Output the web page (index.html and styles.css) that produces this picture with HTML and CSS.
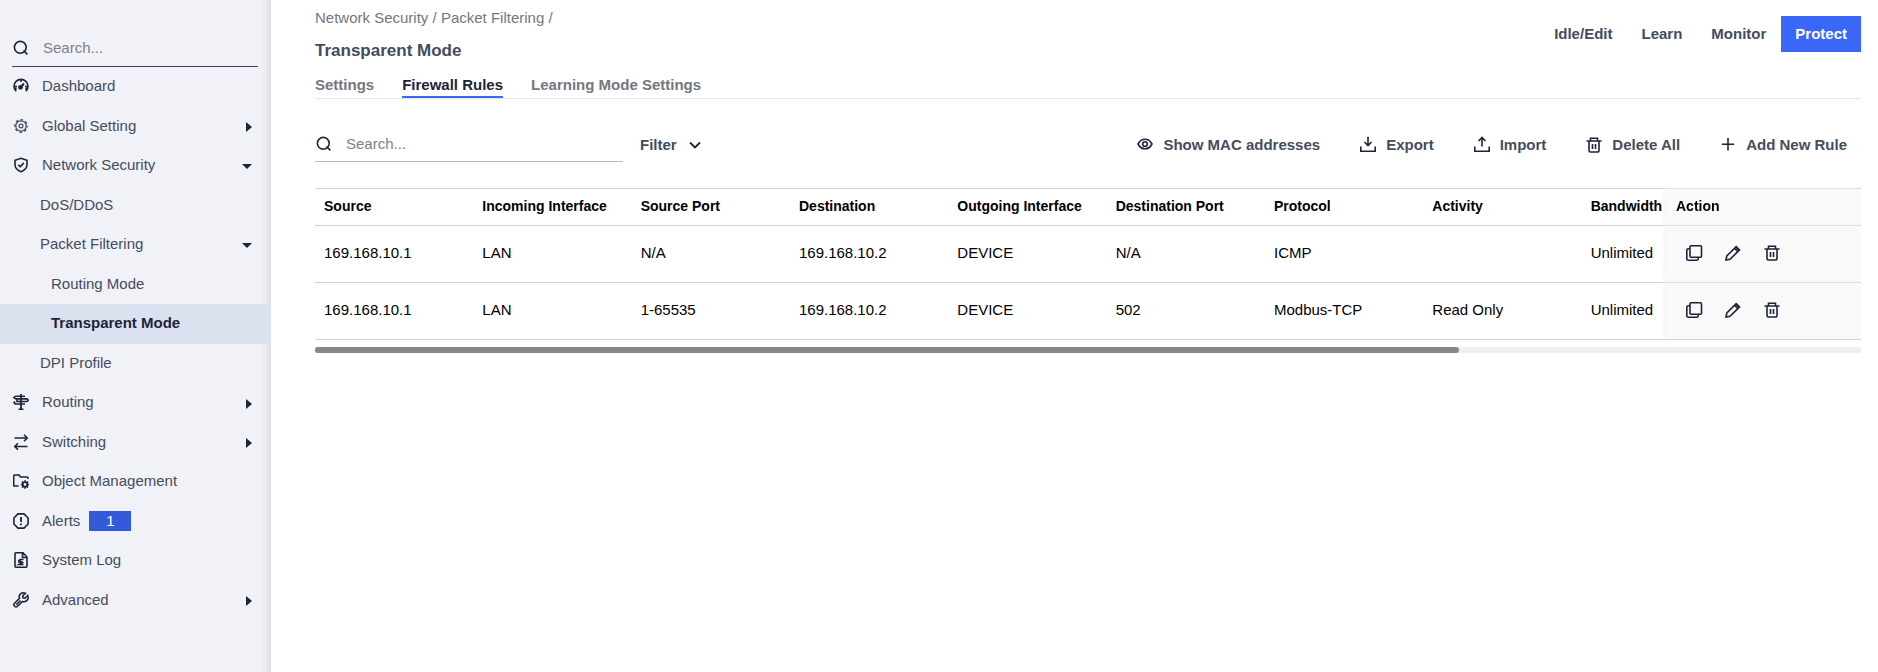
FILE: index.html
```html
<!DOCTYPE html>
<html lang="en">
<head>
<meta charset="utf-8">
<title>Transparent Mode</title>
<link rel="stylesheet" href="styles.css">
</head>
<body>
<svg class="sprite" aria-hidden="true">
  <symbol id="i-search" viewBox="0 0 16 16"><circle cx="7.3" cy="7.3" r="5.900"/><path d="M10.500 10.500 14.400 14.400"/></symbol>
  <symbol id="i-trash" viewBox="0 0 18 18"><path d="M1.500 5h15M5.500 4.500V2.200h7v2.300M4 5v9.500a1.500 1.500 0 0 0 1.500 1.500h7a1.500 1.500 0 0 0 1.500-1.500V5"/><path d="M7.500 8v5M10.500 8v5"/></symbol>
  <symbol id="i-copy" viewBox="0 0 18 18"><rect x="5" y="1.800" width="11.500" height="11.500" rx="1"/><path d="M4.500 4.800H3.300a1.500 1.500 0 0 0-1.500 1.500v8.400a1.500 1.500 0 0 0 1.500 1.500h8.400a1.500 1.500 0 0 0 1.500-1.500v-.8"/></symbol>
  <symbol id="i-edit" viewBox="0 0 18 18"><path d="M2 16l.8-4L12.200 2.600l3.300 3.300L6 15.200zM10.500 4.300l3.300 3.300"/><path d="M12.200 3.500l2.600 2.600"/></symbol>
</svg>
<div class="app">
  <aside class="sidebar">
    <label class="side-search">
      <svg class="icon" viewBox="0 0 16 16"><use href="#i-search"/></svg>
      <input type="search" placeholder="Search..." aria-label="Search menu">
    </label>
    <nav>
      <ul class="menu">
        <li><a href="#"><svg class="icon" viewBox="0 0 16 16"><path d="M3 13.300A7 7 0 1 1 13 13.300M8 1.500v2.500M1.500 8.500H4M14.500 8.500H12"/><path d="M7.500 9.500 11 5.500" stroke-width="2"/><circle cx="7.500" cy="9.300" r="1.600" fill="currentColor"/><path d="M2.800 9.500v3M13.200 9.500v3"/></svg>Dashboard</a></li>
        <li><a href="#"><svg class="icon fine" viewBox="0 0 16 16"><circle cx="8" cy="8" r="1.900"/><circle cx="8" cy="8" r="5.200"/><circle cx="8" cy="8" r="6.300" stroke-dasharray="2.700 2.248" stroke-dashoffset="1.350"/></svg>Global Setting<i class="caret right"></i></a></li>
        <li><a href="#"><svg class="icon" viewBox="0 0 16 16"><path d="M8 1.300 14 3.300v4.200c0 3.500-2.700 5.900-6 7.200-3.300-1.300-6-3.700-6-7.200V3.300z"/><path d="M5.300 7.800 7.300 9.700 10.800 5.900"/></svg>Network Security<i class="caret down"></i></a></li>
        <li><a class="sub" href="#">DoS/DDoS</a></li>
        <li><a class="sub" href="#">Packet Filtering<i class="caret down"></i></a></li>
        <li><a class="subsub" href="#">Routing Mode</a></li>
        <li><a class="subsub active" href="#" aria-current="page">Transparent Mode</a></li>
        <li><a class="sub" href="#">DPI Profile</a></li>
        <li><a href="#"><svg class="icon" viewBox="0 0 16 16"><path d="M8 0v16M5.500 15.500h5" stroke-width="1.800"/><path d="M2.300 2.200H12M2.300 2.200 1 3.500l1.300 1.300H12M4 4.900h10L15.300 6.200 14 7.500H4zM2.300 7.500 1 8.800 2.300 10H12"/></svg>Routing<i class="caret right"></i></a></li>
        <li><a href="#"><svg class="icon" viewBox="0 0 16 16"><path d="M1.500 4h12.500M11 .7 14.200 4 11 7.300M14.500 12.500H2M5 9.200 1.800 12.500 5 15.800"/></svg>Switching<i class="caret right"></i></a></li>
        <li><a href="#"><svg class="icon" viewBox="0 0 16 16"><path d="M5.500 13H1.500a.8.800 0 0 1-.8-.8V2.800a.8.800 0 0 1 .8-.8H6l1.500 2h6.700a.8.800 0 0 1 .8.800V6"/><circle cx="12" cy="11.500" r="2.300" stroke-width="1.800"/><path d="M12 7.300v1.500M12 14.200v1.500M7.800 11.500h1.500M14.700 11.500h1.500M9 8.500l1.200 1.200M13.800 13.300l1.200 1.200M15 8.500l-1.200 1.200M10.200 13.300 9 14.500"/></svg>Object Management</a></li>
        <li><a href="#"><svg class="icon" viewBox="0 0 16 16"><path d="M5 .9h6L15.100 5v6L11 15.100H5L.9 11V5z"/><path d="M8 4v5M8 10.500v1.800" stroke-width="1.800"/></svg>Alerts<span class="badge">1</span></a></li>
        <li><a href="#"><svg class="icon" viewBox="0 0 16 16"><path d="M3 .8h7L14 5v9.200a1 1 0 0 1-1 1H3a1 1 0 0 1-1-1V1.800a1 1 0 0 1 1-1zM9.500 1v4.500H14"/><path d="M10.500 7.500H7L6 8.500 9.500 10.500 6 12.500h4.500M5 10h3"/></svg>System Log</a></li>
        <li><a href="#"><svg class="icon" viewBox="0 0 16 16"><path d="M14.700 3.500 12 6.200 10 5.800 9.700 4 12.400 1.300C10 .3 7.400 1 6.500 3.300c-.4 1-.3 2 0 3L1.300 11.500c-1.500 1.700 1.300 4.500 3 3L9.500 9.400c1 .4 2.200.4 3.200-.1 2.200-1 3-3.500 2-5.800z"/><path d="M3.200 12.700 7.500 8.500"/></svg>Advanced<i class="caret right"></i></a></li>
      </ul>
    </nav>
  </aside>

  <main class="main">
    <header class="top">
      <div>
        <nav class="crumbs" aria-label="Breadcrumb"><a href="#">Network Security</a> / <a href="#">Packet Filtering</a> /</nav>
        <h1>Transparent Mode</h1>
      </div>
      <div class="modes">
        <button type="button">Idle/Edit</button>
        <button type="button">Learn</button>
        <button type="button">Monitor</button>
        <button type="button" class="on">Protect</button>
      </div>
    </header>
    <nav class="tabs">
      <a href="#">Settings</a>
      <a class="current" href="#">Firewall Rules</a>
      <a href="#">Learning Mode Settings</a>
    </nav>

    <div class="toolbar">
      <label class="rule-search">
        <svg class="icon" viewBox="0 0 16 16"><use href="#i-search"/></svg>
        <input type="search" placeholder="Search..." aria-label="Search rules">
      </label>
      <button type="button" class="filter">Filter<svg class="chevron" viewBox="0 0 12 8"><path d="M1 1.500l5 5 5-5"/></svg></button>
      <div class="actions">
        <button type="button"><svg class="tool" viewBox="0 0 18 18"><path d="M2 8c1.600-3 4-4.800 7-4.800S14.400 5 16 8c-1.600 3-4 4.800-7 4.800S3.600 11 2 8z"/><circle cx="9" cy="8" r="2.300"/></svg>Show MAC addresses</button>
        <button type="button"><svg class="tool" viewBox="0 0 18 18"><path d="M1.800 10.500v4.700h14.400v-4.700M9 .8v8.500M5.500 6 9 9.500 12.500 6"/></svg>Export</button>
        <button type="button"><svg class="tool" viewBox="0 0 18 18"><path d="M1.800 10.500v4.700h14.400v-4.700M9 10.500V2M5.500 5 9 1.500 12.500 5"/></svg>Import</button>
        <button type="button"><svg class="tool" viewBox="0 0 18 18"><use href="#i-trash"/></svg>Delete All</button>
        <button type="button"><svg class="tool" viewBox="0 0 18 18"><path d="M9 2v12.500M2.800 8.300h12.400"/></svg>Add New Rule</button>
      </div>
    </div>

    <div class="table-wrap">
      <table>
        <colgroup><col span="12"><col class="col-action"></colgroup>
        <thead>
          <tr><th>Source</th><th>Incoming Interface</th><th>Source Port</th><th>Destination</th><th>Outgoing Interface</th><th>Destination Port</th><th>Protocol</th><th>Activity</th><th>Bandwidth</th><td colspan="3"></td><th class="pinned">Action</th></tr>
        </thead>
        <tbody>
          <tr><td>169.168.10.1</td><td>LAN</td><td>N/A</td><td>169.168.10.2</td><td>DEVICE</td><td>N/A</td><td>ICMP</td><td></td><td>Unlimited</td><td colspan="3"></td>
            <td class="pinned"><div class="row-actions">
              <button type="button" aria-label="Duplicate"><svg class="tool" viewBox="0 0 18 18"><use href="#i-copy"/></svg></button>
              <button type="button" aria-label="Edit"><svg class="tool" viewBox="0 0 18 18"><use href="#i-edit"/></svg></button>
              <button type="button" aria-label="Delete"><svg class="tool" viewBox="0 0 18 18"><use href="#i-trash"/></svg></button>
            </div></td></tr>
          <tr><td>169.168.10.1</td><td>LAN</td><td>1-65535</td><td>169.168.10.2</td><td>DEVICE</td><td>502</td><td>Modbus-TCP</td><td>Read Only</td><td>Unlimited</td><td colspan="3"></td>
            <td class="pinned"><div class="row-actions">
              <button type="button" aria-label="Duplicate"><svg class="tool" viewBox="0 0 18 18"><use href="#i-copy"/></svg></button>
              <button type="button" aria-label="Edit"><svg class="tool" viewBox="0 0 18 18"><use href="#i-edit"/></svg></button>
              <button type="button" aria-label="Delete"><svg class="tool" viewBox="0 0 18 18"><use href="#i-trash"/></svg></button>
            </div></td></tr>
        </tbody>
      </table>
    </div>
    <div class="scroll-track"><div class="scroll-thumb"></div></div>
  </main>
</div>
</body>
</html>
```
FILE: styles.css
```css
* { box-sizing: border-box; }

body {
  margin: 0;
  background: #fff;
  color: #454c5c;
  font: 15px/20px "Liberation Sans", Arial, sans-serif;
}

a { color: inherit; text-decoration: none; }

button, input {
  border: 0;
  padding: 0;
  background: none;
  color: inherit;
  font: inherit;
}

button { font-weight: bold; cursor: pointer; white-space: nowrap; }
input { flex: 1; min-width: 0; outline: 0; }
input::placeholder { color: #7b818e; opacity: 1; }

.sprite { display: none; }

svg {
  flex: none;
  fill: none;
  stroke: currentColor;
  stroke-width: 1.6;
  color: #1d243a;
}

.icon { width: 16px; height: 16px; }
.icon.fine { stroke-width: 1.2; color: #3d455c; }
.tool { width: 18px; height: 18px; stroke-width: 1.6; }
.chevron { width: 12px; height: 8px; stroke-width: 1.8; }

.app { display: flex; min-height: 100vh; }

/* Sidebar */
.sidebar {
  flex: none;
  width: 271px;
  padding-top: 24px;
  background: linear-gradient(to left, #dadce3, #eaebf1 5px, #f1f2f8 11px);
}

.side-search {
  display: flex;
  align-items: center;
  gap: 14px;
  height: 43px;
  margin: 0 13px 0 12px;
  padding: 8px 1px 2px;
  border-bottom: 1px solid #3f465c;
}

.menu { list-style: none; margin: 0; padding: 0; }
.menu li { height: 39px; }
.menu li:nth-child(odd) { height: 40px; }

.menu a {
  display: flex;
  align-items: center;
  height: 100%;
  padding: 0 19px 2px 13px;
}

.menu .icon { margin-right: 13px; }
.menu .sub { padding-left: 40px; }
.menu .subsub { padding-left: 51px; }
.menu .active { background: #dbe1ef; color: #1d243a; font-weight: bold; }

.caret { margin-left: auto; margin-top: 3px; }
.caret.right {
  border: 5px solid transparent;
  border-left: 6px solid #1d243a;
  border-right: 0;
}
.caret.down {
  border: 5px solid transparent;
  border-top-color: #1d243a;
  border-bottom: 0;
}

.badge {
  width: 42px;
  margin-left: 9px;
  background: #335bd9;
  color: #fff;
  text-align: center;
}

/* Page header */
.main { flex: 1; min-width: 0; padding: 8px 17px 0 44px; }

.top { display: flex; justify-content: space-between; align-items: flex-start; }
.crumbs { color: #737781; }
h1 { margin: 12px 0 0; font-size: 17px; line-height: 22px; }

.modes { display: flex; gap: 1px; padding-top: 8px; }
.modes button { height: 36px; padding: 0 14px; }
.modes .on { background: #3a67f8; color: #fff; }

.tabs {
  display: flex;
  gap: 28px;
  margin-top: 13px;
  border-bottom: 1px solid #e6e6e6;
  color: #737781;
  font-weight: bold;
}
.tabs a { padding-bottom: 3px; }
.tabs .current { padding-bottom: 1px; border-bottom: 2px solid #3a67f8; color: #1d243a; }

/* Toolbar */
.toolbar { display: flex; align-items: center; margin-top: 27px; }

.rule-search {
  display: flex;
  align-items: center;
  gap: 14px;
  width: 308px;
  height: 36px;
  padding: 0 1px;
  border-bottom: 1px solid #b9b9b9;
}

.filter { display: flex; align-items: center; gap: 12px; margin-left: 17px; padding-top: 2px; }

.actions { display: flex; gap: 39px; margin-left: auto; padding: 2px 14px 0 0; }
.actions button { display: flex; align-items: center; gap: 9px; }

/* Rules table */
.table-wrap { margin-top: 26px; overflow-x: auto; scrollbar-width: none; }

table {
  width: 2095px;
  table-layout: fixed;
  border-collapse: separate;
  border-spacing: 0;
  border-top: 1px solid #d0d0d0;
  color: #000;
}

.col-action { width: 195px; }

th, td {
  height: 57px;
  padding: 0 9px 2px;
  border-bottom: 1px solid #d0d0d0;
  text-align: left;
  white-space: nowrap;
}
thead th, thead td { height: 37px; font-size: 14px; }

.pinned {
  position: sticky;
  right: 0;
  padding-left: 10px;
  background: #f9f9f9;
  box-shadow: -2px 0 4px #f4f4f4;
}

.row-actions { display: flex; gap: 21px; padding-left: 9px; }
.row-actions button { display: flex; }

.scroll-track { height: 6px; margin-top: 7px; background: #efefef; }
.scroll-thumb { width: 74%; height: 6px; border-radius: 3px; background: #888; }
```
